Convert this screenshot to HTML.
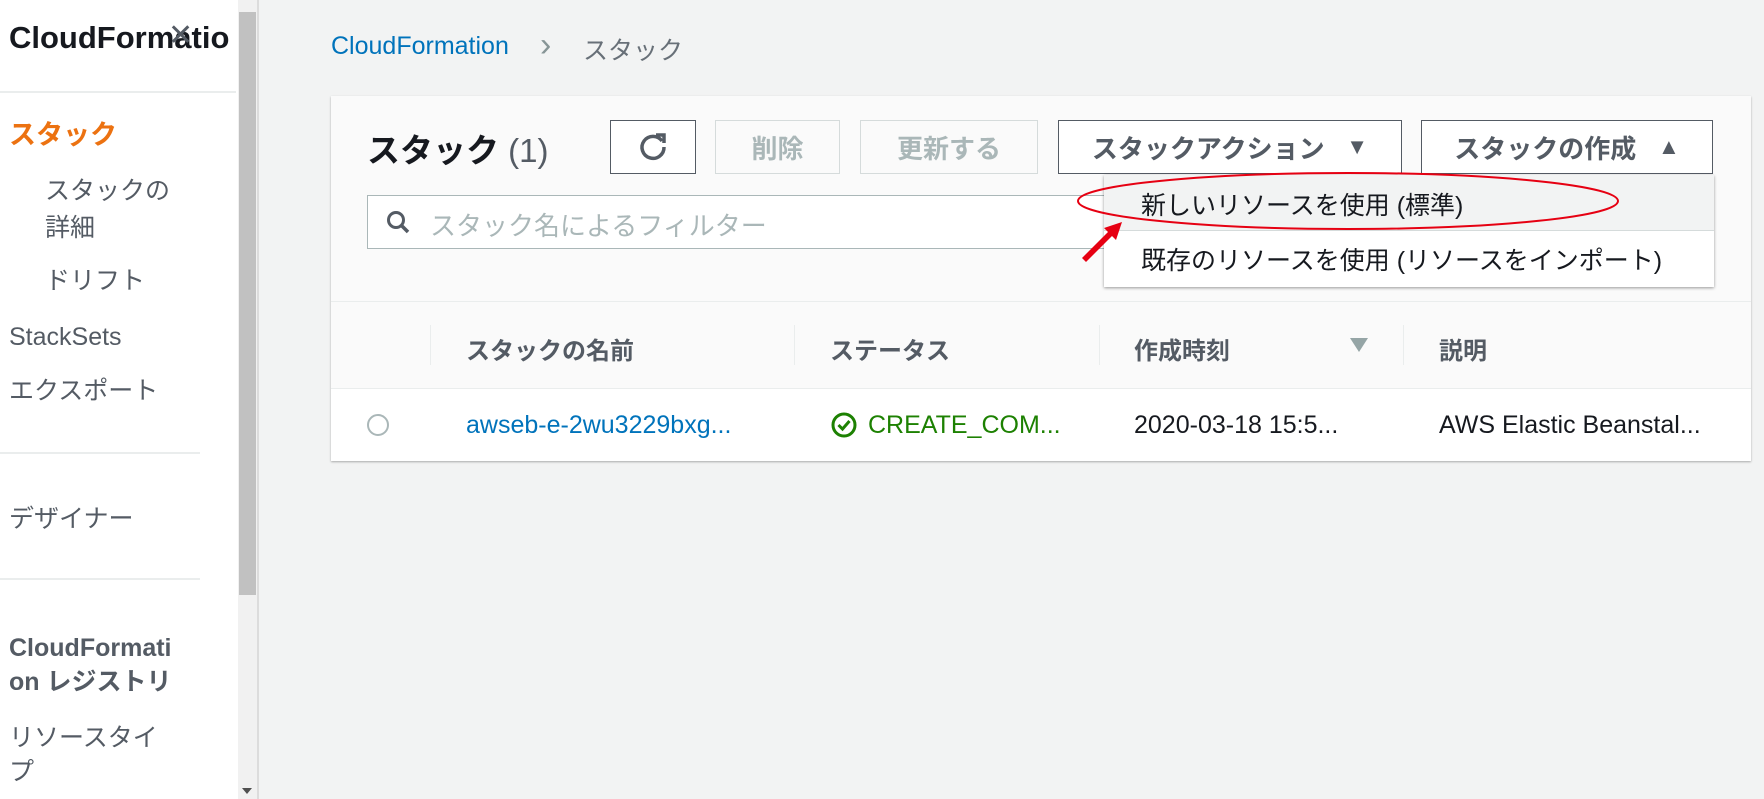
<!DOCTYPE html>
<html><head><meta charset="utf-8"><style>
body{margin:0;width:1764px;height:799px;overflow:hidden;background:#f2f3f3;font-family:"Liberation Sans","Noto Sans CJK JP",sans-serif;position:relative}
.a{position:absolute;white-space:nowrap}
.sb{left:0;top:0;width:238px;height:799px;background:#fff}
.nav{font-size:25px;color:#545b64;line-height:30px}
.hr{position:absolute;height:2px;background:#eaeded}
.btn{position:absolute;border:1px solid #545b64;background:#fff;box-sizing:border-box;font-size:26px;font-weight:bold;color:#545b64;display:flex;align-items:center;justify-content:center}
.dis{border-color:#d5dbdb;color:#aab7b8;background:#fafafa}
.th{font-size:24px;font-weight:bold;color:#545b64}
.td{font-size:24px;color:#16191f}
</style></head><body>
<div class="a sb"></div>
<div class="a" style="left:238px;top:0;width:19px;height:799px;background:#f1f1f1"></div>
<div class="a" style="left:239px;top:12px;width:17px;height:583px;background:#c1c1c1"></div>
<div class="a" style="left:242px;top:788px;width:0;height:0;border:5px solid transparent;border-top:6px solid #505050"></div>
<div class="a" style="left:257px;top:0;width:2px;height:799px;background:#dcdcdc"></div>
<div class="a" style="left:9px;top:20px;font-size:31px;font-weight:bold;color:#16191f">CloudFormatio</div>
<div class="a" style="left:168px;top:18px;font-size:30px;color:#545b64">✕</div>
<div class="hr" style="left:0;top:91px;width:236px"></div>
<div class="a nav" style="left:9px;top:120px;color:#ec7211;font-weight:bold;font-size:27px">スタック</div>
<div class="a nav" style="left:45px;top:176px">スタックの</div>
<div class="a nav" style="left:45px;top:213px">詳細</div>
<div class="a nav" style="left:45px;top:266px">ドリフト</div>
<div class="a nav" style="left:9px;top:322px">StackSets</div>
<div class="a nav" style="left:9px;top:376px">エクスポート</div>
<div class="hr" style="left:0;top:452px;width:200px"></div>
<div class="a nav" style="left:9px;top:504px">デザイナー</div>
<div class="hr" style="left:0;top:578px;width:200px"></div>
<div class="a nav" style="left:9px;top:633px;font-weight:bold;color:#545b64">CloudFormati</div>
<div class="a nav" style="left:9px;top:667px;font-weight:bold;color:#545b64">on レジストリ</div>
<div class="a nav" style="left:9px;top:723px">リソースタイ</div>
<div class="a nav" style="left:9px;top:757px">プ</div>

<div class="a" style="left:331px;top:32px;font-size:25px;color:#0073bb">CloudFormation</div>
<div class="a" style="left:540px;top:26px;font-size:34px;color:#879596">›</div>
<div class="a" style="left:583px;top:31px;font-size:25px;color:#687078">スタック</div>

<div class="a" style="left:331px;top:96px;width:1420px;height:365px;background:#fafafa;box-shadow:0 1px 2px rgba(0,0,0,.3)"></div>
<div class="a" style="left:331px;top:388px;width:1420px;height:73px;background:#fff"></div>
<div class="a" style="left:331px;top:301px;width:1420px;height:1px;background:#eaeded"></div>
<div class="a" style="left:331px;top:388px;width:1420px;height:1px;background:#eaeded"></div>
<div class="a" style="left:367px;top:124px;font-size:33px;font-weight:bold;color:#16191f">スタック <span style="font-weight:normal;color:#545b64">(1)</span></div>
<div class="btn" style="left:610px;top:120px;width:86px;height:54px"><svg width="30" height="30" viewBox="0 0 30 30"><path d="M24 9A11 11 0 1 0 26 15" fill="none" stroke="#545b64" stroke-width="3.5"/><path d="M18 3h8v8" fill="none" stroke="#545b64" stroke-width="3.5"/></svg></div>
<div class="btn dis" style="left:715px;top:120px;width:125px;height:54px">削除</div>
<div class="btn dis" style="left:860px;top:120px;width:178px;height:54px">更新する</div>
<div class="btn" style="left:1058px;top:120px;width:344px;height:54px">スタックアクション&nbsp;&nbsp;&nbsp;<span style="font-size:22px">▼</span></div>
<div class="btn" style="left:1421px;top:120px;width:292px;height:54px">スタックの作成&nbsp;&nbsp;&nbsp;<span style="font-size:22px">▲</span></div>
<div class="a" style="left:367px;top:195px;width:760px;height:54px;background:#fff;border:1px solid #aab7b8;box-sizing:border-box"></div>
<svg class="a" style="left:386px;top:210px" width="26" height="26" viewBox="0 0 26 26"><circle cx="10" cy="10" r="7.5" fill="none" stroke="#545b64" stroke-width="3"/><path d="M15 15l7 7" stroke="#545b64" stroke-width="3.5"/></svg>
<div class="a" style="left:430px;top:206px;font-size:26px;color:#aab7b8">スタック名によるフィルター</div>

<div class="a" style="left:1104px;top:175px;width:610px;height:112px;background:#fff;box-shadow:0 1px 3px rgba(0,0,0,.4)"></div>
<div class="a" style="left:1104px;top:175px;width:610px;height:56px;background:#f2f3f3;border-bottom:1px solid #d5dbdb;box-sizing:border-box"></div>
<div class="a" style="left:1141px;top:186px;font-size:25px;color:#16191f">新しいリソースを使用 (標準)</div>
<div class="a" style="left:1141px;top:241px;font-size:25px;color:#16191f">既存のリソースを使用 (リソースをインポート)</div>

<div class="a th" style="left:466px;top:331px">スタックの名前</div>
<div class="a th" style="left:830px;top:331px">ステータス</div>
<div class="a th" style="left:1134px;top:331px">作成時刻</div>
<div class="a" style="left:1350px;top:338px;width:0;height:0;border:9px solid transparent;border-top:14px solid #95a5a6"></div>
<div class="a th" style="left:1439px;top:331px">説明</div>
<div class="a" style="left:430px;top:325px;width:1px;height:40px;background:#eaeded"></div>
<div class="a" style="left:794px;top:325px;width:1px;height:40px;background:#eaeded"></div>
<div class="a" style="left:1099px;top:325px;width:1px;height:40px;background:#eaeded"></div>
<div class="a" style="left:1403px;top:325px;width:1px;height:40px;background:#eaeded"></div>
<div class="a" style="left:367px;top:414px;width:22px;height:22px;border:2px solid #aab7b8;border-radius:50%;box-sizing:border-box"></div>
<div class="a td" style="left:466px;top:411px;color:#0073bb;font-size:25px">awseb-e-2wu3229bxg...</div>
<svg class="a" style="left:831px;top:412px" width="26" height="26" viewBox="0 0 26 26"><circle cx="13" cy="13" r="11" fill="none" stroke="#1d8102" stroke-width="3"/><path d="M7.5 13l4 4 7-8" fill="none" stroke="#1d8102" stroke-width="3"/></svg>
<div class="a td" style="left:868px;top:411px;color:#1d8102;font-size:25px">CREATE_COM...</div>
<div class="a td" style="left:1134px;top:411px;font-size:25px">2020-03-18 15:5...</div>
<div class="a td" style="left:1439px;top:411px;font-size:25px">AWS Elastic Beanstal...</div>

<svg class="a" style="left:0;top:0" width="1764" height="799"><ellipse cx="1348" cy="201" rx="270" ry="28" fill="none" stroke="#e60012" stroke-width="2"/><path d="M1082 258L1108 232L1104 228L1122 222L1116 240L1112 236L1086 262Z" fill="#e60012"/></svg>
</body></html>
